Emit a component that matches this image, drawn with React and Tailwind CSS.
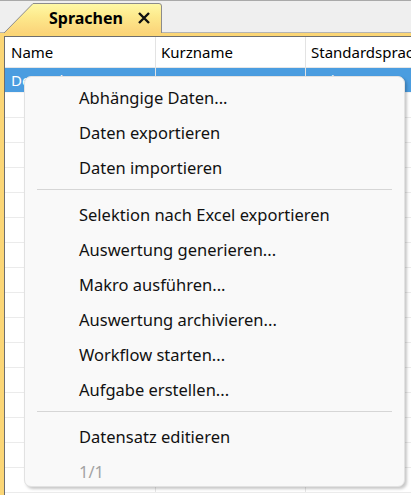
import React from "react";

const rows = Array.from({ length: 16 });

function MenuItem({ children, disabled }) {
  return (
    <div
      className={
        "h-[35px] flex items-center pl-[54px] text-[16.5px] " +
        (disabled ? "text-[#a3a3a3]" : "text-[#111]")
      }
    >
      {children}
    </div>
  );
}

function Separator() {
  return (
    <div className="pt-[3px] pb-[8px] px-[12px]">
      <div className="h-px bg-[#d6d6d6]" />
    </div>
  );
}

export default function App() {
  return (
    <div className="relative w-[411px] h-[495px] overflow-hidden bg-white font-['Noto_Sans',sans-serif]">
      {/* tab strip */}
      <div className="h-[33px] bg-[#efefef] border-t border-[#a9a9a9] border-b border-b-[#b4b4b4] flex items-end pl-[4px]">
        <div className="relative -mb-px w-[158px] h-[30px] flex items-center">
          <svg className="absolute inset-0" width="158" height="30" viewBox="0 0 158 30">
            <defs>
              <linearGradient id="tabfill" x1="0" y1="0" x2="0" y2="1">
                <stop offset="0" stopColor="#fff9a6" />
                <stop offset="0.45" stopColor="#fde98c" />
                <stop offset="1" stopColor="#fbd47a" />
              </linearGradient>
            </defs>
            <path d="M0 30 L29 0.5 L155 0.5 Q157.5 0.5 157.5 3 L157.5 30 Z" fill="url(#tabfill)" />
            <path d="M0 30 L29 0.5 L155 0.5 Q157.5 0.5 157.5 3 L157.5 30" fill="none" stroke="#8c8c8c" strokeWidth="1" />
          </svg>
          <span className="relative pl-[45px] text-[16px] font-bold text-black leading-none">Sprachen</span>
          <svg className="relative ml-[15px]" width="12" height="12" viewBox="0 0 12 12">
            <path d="M1 1 L11 11 M11 1 L1 11" stroke="#111" strokeWidth="2.4" />
          </svg>
        </div>
      </div>

      {/* document panel */}
      <div className="border-t-[3px] border-l-[4px] border-[#fbd676] h-full">
        <div className="border-t border-l border-[#6e6e6e] h-full">
          <div className="flex h-[31px] border-b border-[#e6e6e6] text-[15px] text-black">
            <div className="w-[151px] shrink-0 border-r border-[#e3e3e3] pl-[6px] flex items-center">Name</div>
            <div className="w-[150px] shrink-0 border-r border-[#e3e3e3] pl-[5px] flex items-center">Kurzname</div>
            <div className="flex-1 min-w-0 pl-[5px] flex items-center whitespace-nowrap overflow-hidden">Standardsprache</div>
          </div>
          <div className="flex h-[25px] border-b border-[#f4f4f4] bg-[#4b9de0] text-[15px] text-white">
            <div className="w-[151px] shrink-0 border-r border-[#e3e3e3] pl-[6px] flex items-center">Deutsch</div>
            <div className="w-[150px] shrink-0 border-r border-[#e3e3e3] pl-[5px] flex items-center">DE</div>
            <div className="flex-1 min-w-0 pl-[5px] flex items-center">Nein</div>
          </div>
          {rows.map((_, i) => (
            <div key={i} className="flex h-[25px] border-b border-[#ebebeb]">
              <div className="w-[151px] shrink-0 border-r border-[#e6e6e6]" />
              <div className="w-[150px] shrink-0 border-r border-[#e6e6e6]" />
              <div className="flex-1" />
            </div>
          ))}
        </div>
      </div>

      {/* context menu */}
      <div className="absolute left-[24px] top-[76px] w-[381px] h-[411px] rounded-[7px] bg-[#f9f9f9] border border-[#e2e2e2] shadow-[2px_2px_3px_rgba(0,0,0,0.22)] pt-[4px]">
        <MenuItem>Abhängige Daten...</MenuItem>
        <MenuItem>Daten exportieren</MenuItem>
        <MenuItem>Daten importieren</MenuItem>
        <Separator />
        <MenuItem>Selektion nach Excel exportieren</MenuItem>
        <MenuItem>Auswertung generieren...</MenuItem>
        <MenuItem>Makro ausführen...</MenuItem>
        <MenuItem>Auswertung archivieren...</MenuItem>
        <MenuItem>Workflow starten...</MenuItem>
        <MenuItem>Aufgabe erstellen...</MenuItem>
        <Separator />
        <MenuItem>Datensatz editieren</MenuItem>
        <MenuItem disabled>1/1</MenuItem>
      </div>
    </div>
  );
}
